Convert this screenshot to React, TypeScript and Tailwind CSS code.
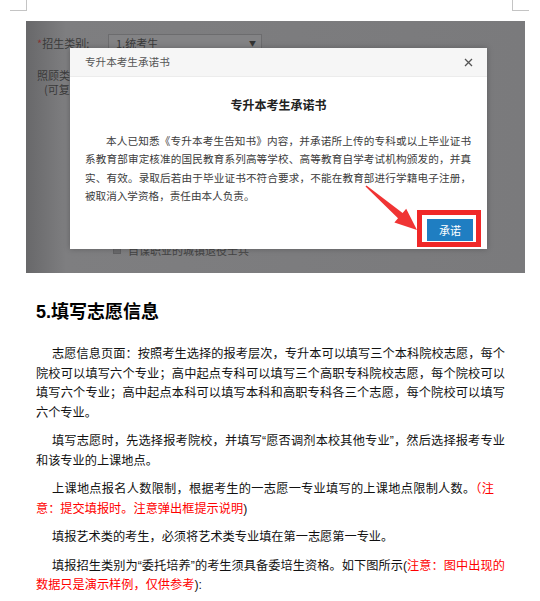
const justLine = "block whitespace-nowrap text-justify [text-align-last:justify]";
const plainLine = "block whitespace-nowrap";

function Red({ children }: { children: React.ReactNode }) {
  return <span className="text-[#ff0000]">{children}</span>;
}

function CornerMarks() {
  return (
    <div className="flex justify-between pl-[10px] pr-[11px] h-[11px]">
      <div className="w-[17px] h-[11px] border-r border-b border-[#c4c4c4]" />
      <div className="w-[17px] h-[11px] border-l border-b border-[#c4c4c4]" />
    </div>
  );
}

function PromiseModal() {
  return (
    <div className="absolute left-[44px] top-[27px] w-[417px] h-[201px] bg-white flex flex-col shadow-[0_0_6px_rgba(0,0,0,0.25)] font-['Noto_Sans_CJK_SC',sans-serif]">
      <div className="h-[29px] shrink-0 flex items-center justify-between pl-[15px] pr-[14px] bg-[#f6f6f6] border-b border-[#ececec]">
        <span className="text-[10.6px] leading-[14px] text-[#555]">专升本考生承诺书</span>
        <svg width="9" height="9" viewBox="0 0 9 9" className="text-[#555]">
          <path d="M1 1 L8 8 M8 1 L1 8" stroke="currentColor" strokeWidth="1.3" />
        </svg>
      </div>
      <div className="mt-[20px] text-center text-[12px] leading-[15px] font-bold text-[#222]">专升本考生承诺书</div>
      <div className="mt-[20px] px-[15px] w-[416px] text-[10.6px] leading-[18.3px] text-[#3c3c3c]">
        <span className={`${justLine} pl-[21px]`}>本人已知悉《专升本考生告知书》内容，并承诺所上传的专科或以上毕业证书</span>
        <span className={justLine}>系教育部审定核准的国民教育系列高等学校、高等教育自学考试机构颁发的，并真</span>
        <span className={justLine}>实、有效。录取后若由于毕业证书不符合要求，不能在教育部进行学籍电子注册，</span>
        <span className={plainLine}>被取消入学资格，责任由本人负责。</span>
      </div>
      <div className="mt-auto mb-[8px] flex justify-end pr-[14px]">
        <button className="w-[46px] h-[22px] bg-[#1f7ec2] text-white text-[11px] leading-[22px]">承诺</button>
      </div>
    </div>
  );
}

function Screenshot() {
  return (
    <div className="relative ml-[26px] mt-[10px] w-[499px] h-[252px] overflow-hidden bg-linear-to-r from-[#68686a] via-[#7e7e80] via-[8%] to-[#7a7a7c] font-['Noto_Sans_CJK_SC',sans-serif] text-[11px] text-[#3a3a3a]">
      <div className="pl-[11px] pt-[13px]">
        <div className="flex items-center h-[18px]">
          <span className="w-[71px] leading-[14px]">
            <span className="text-[#8a3434]">*</span>招生类别:
          </span>
          <div className="w-[154px] h-[18px] border border-[#6c6c6e] bg-[#838385] flex items-center justify-between pl-[7px] pr-[5px]">
            <span className="leading-[14px]">1.统考生</span>
            <span className="text-[7px] text-[#333]">▼</span>
          </div>
        </div>
        <div className="w-[33px] overflow-hidden whitespace-nowrap">
          <div className="mt-[16px] leading-[14px]">照顾类别:</div>
          <div className="pl-[7px] leading-[14px]">(可复选)</div>
        </div>
        <div className="mt-[147px] ml-[76px] flex items-center h-[14px] gap-[7px]">
          <span className="w-[8px] h-[8px] bg-[#6a6a6c] border border-[#606062]" />
          <span className="leading-[14px] text-[#444]">自谋职业的城镇退役士兵</span>
        </div>
      </div>

      <PromiseModal />

      <svg className="absolute left-0 top-0" width="499" height="252" viewBox="0 0 499 252">
        <polygon
          points="340.5,164.4 376.6,192 380.2,187.8 391,209 368.4,201.4 372,197.2 339.5,165.6"
          fill="#f03434"
        />
      </svg>
      <div className="absolute left-[391px] top-[189px] w-[64px] h-[37px] border-[5px] border-[#f02828]" />
    </div>
  );
}

export default function App() {
  return (
    <div className="w-[540px] h-[601px] overflow-hidden bg-white text-[#111] font-['Liberation_Sans','Noto_Sans_CJK_SC',sans-serif]">
      <CornerMarks />
      <Screenshot />

      <h2 className="mt-[27px] ml-[36px] text-[18px] leading-[24px] font-bold text-black">5.填写志愿信息</h2>

      <div className="mt-[21px] ml-[36px] w-[469px] text-[12.2px] leading-[19.5px]">
        <p>
          <span className={`${justLine} pl-[16px]`}>志愿信息页面：按照考生选择的报考层次，专升本可以填写三个本科院校志愿，每个</span>
          <span className={justLine}>院校可以填写六个专业；高中起点专科可以填写三个高职专科院校志愿，每个院校可以</span>
          <span className={justLine}>填写六个专业；高中起点本科可以填写本科和高职专科各三个志愿，每个院校可以填写</span>
          <span className={plainLine}>六个专业。</span>
        </p>
        <p className="mt-[9px]">
          <span className={`${justLine} pl-[16px]`}>填写志愿时，先选择报考院校，并填写“愿否调剂本校其他专业”，然后选择报考专业</span>
          <span className={plainLine}>和该专业的上课地点。</span>
        </p>
        <p className="mt-[9px]">
          <span className={`${justLine} pl-[16px] w-[458px]`}>
            上课地点报名人数限制，根据考生的一志愿一专业填写的上课地点限制人数。<Red>（注</Red>
          </span>
          <span className={plainLine}>
            <Red>意：提交填报时。注意弹出框提示说明</Red>)
          </span>
        </p>
        <p className="mt-[9px]">
          <span className={`${plainLine} pl-[16px]`}>填报艺术类的考生，必须将艺术类专业填在第一志愿第一专业。</span>
        </p>
        <p className="mt-[9px]">
          <span className={`${justLine} pl-[16px]`}>
            填报招生类别为“委托培养”的考生须具备委培生资格。如下图所示(<Red>注意：图中出现的</Red>
          </span>
          <span className={plainLine}>
            <Red>数据只是演示样例，仅供参考</Red>):
          </span>
        </p>
      </div>
    </div>
  );
}
